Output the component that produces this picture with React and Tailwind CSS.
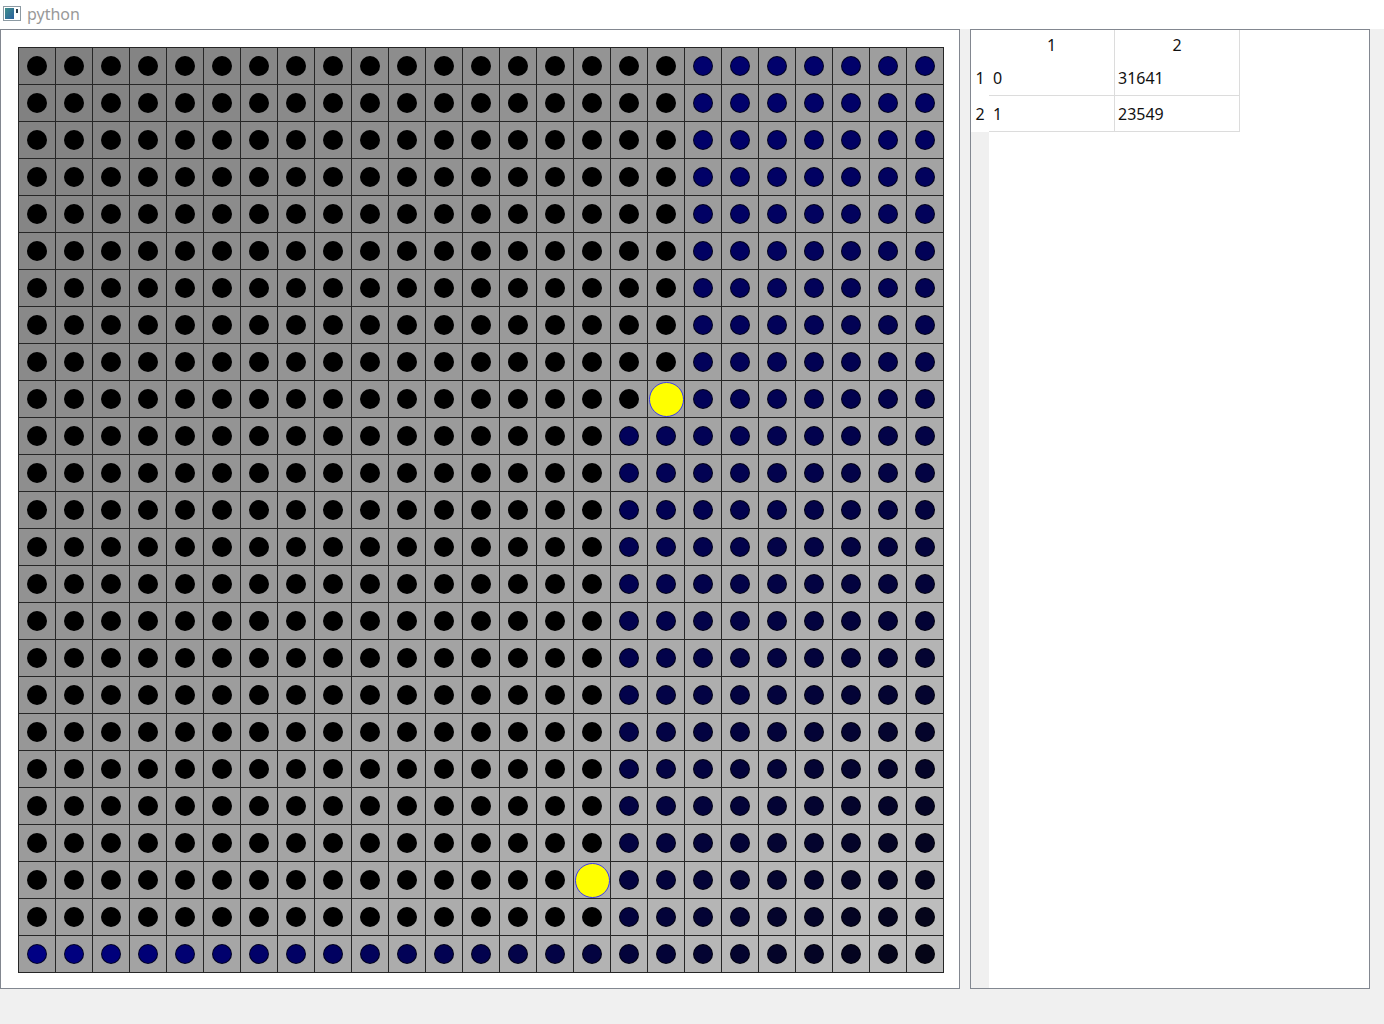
import React from 'react';

const N = 25;
const yellows = { '9-17': true, '22-15': true };

const isBlue = (r, c) => {
    if (r === 24) return true;
    if (r <= 9) return c >= 18;
    return c >= 16;
};

const cellGray = (r, c) => {
    const g = Math.round(128 + (r + c) * 1.3);
    return `rgb(${g},${g},${g})`;
};

const dotColor = (r, c) => {
    if (!isBlue(r, c)) return '#000000';
    const b = Math.max(16, Math.round(132 - c * 1.2 - 80 * (r * c) / 576));
    const rg = Math.round(Math.max(0, (128 - b) / 22));
    return `rgb(${rg},${rg},${b})`;
};

const WindowIcon = () => (
    <svg width="18" height="15" viewBox="0 0 18 15" className="shrink-0">
        <defs>
            <linearGradient id="pane" x1="0" y1="0" x2="1" y2="1">
                <stop offset="0" stopColor="#3f8f8a" />
                <stop offset="1" stopColor="#2a5f9e" />
            </linearGradient>
        </defs>
        <rect x="0.5" y="0.5" width="17" height="14" fill="#fff" stroke="#8c9aa3" />
        <rect x="2" y="2" width="9" height="11" fill="url(#pane)" />
        <rect x="13" y="3" width="2" height="4" fill="#2b3f4f" />
    </svg>
);

const Board = () => {
    const cells = [];
    for (let r = 0; r < N; r++) {
        for (let c = 0; c < N; c++) {
            const key = `${r}-${c}`;
            cells.push(
                <div key={key} className="w-[36px] h-[36px] flex items-center justify-center" style={{ backgroundColor: cellGray(r, c) }}>
                    {yellows[key] ? (
                        <div className="w-[35px] h-[35px] rounded-full bg-[#ffff00] border border-[#3c3cf0]" />
                    ) : (
                        <div className="w-[20px] h-[20px] rounded-full border border-black/70" style={{ backgroundColor: dotColor(r, c) }} />
                    )}
                </div>
            );
        }
    }
    return (
        <div className="grid grid-cols-[repeat(25,36px)] gap-px p-px bg-[#262626] w-fit">
            {cells}
        </div>
    );
};

const rows = [
    { id: 1, a: '0', b: '31641' },
    { id: 2, a: '1', b: '23549' },
];

export default function App() {
    return (
        <div className="w-[1384px] h-[1024px] bg-[#f0f0f0] flex flex-col overflow-hidden font-['Noto_Sans',sans-serif]">
            {/* title bar */}
            <div className="h-[29px] bg-white flex items-center gap-[6px] pl-[3px] pb-[2px]">
                <WindowIcon />
                <span className="text-[16px] text-[#999999] leading-none">python</span>
            </div>

            <div className="flex">
                {/* board panel */}
                <div className="w-[960px] h-[960px] bg-white border border-[#828790] pl-[17px] pt-[17px]">
                    <Board />
                </div>

                {/* table panel */}
                <div className="ml-[10px] w-[400px] h-[960px] bg-white border border-[#828790] flex text-[16px] text-[#111]">
                    <div className="w-[18px] flex flex-col">
                        <div className="h-[30px] bg-white" />
                        {rows.map((row) => (
                            <div key={row.id} className="h-[36px] bg-white flex items-center justify-center">{row.id}</div>
                        ))}
                        <div className="flex-1 bg-[#f0f0f0]" />
                    </div>
                    <div className="flex flex-col">
                        <div className="h-[30px] flex">
                            <div className="w-[126px] border-r border-[#dcdcdc] flex items-center justify-center">1</div>
                            <div className="w-[125px] border-r border-[#dcdcdc] flex items-center justify-center">2</div>
                        </div>
                        {rows.map((row) => (
                            <div key={row.id} className="h-[36px] flex border-b border-[#dcdcdc]">
                                <div className="w-[126px] border-r border-[#dcdcdc] flex items-center pl-[4px]">{row.a}</div>
                                <div className="w-[125px] border-r border-[#dcdcdc] flex items-center pl-[3px]">{row.b}</div>
                            </div>
                        ))}
                    </div>
                </div>
            </div>
        </div>
    );
}
